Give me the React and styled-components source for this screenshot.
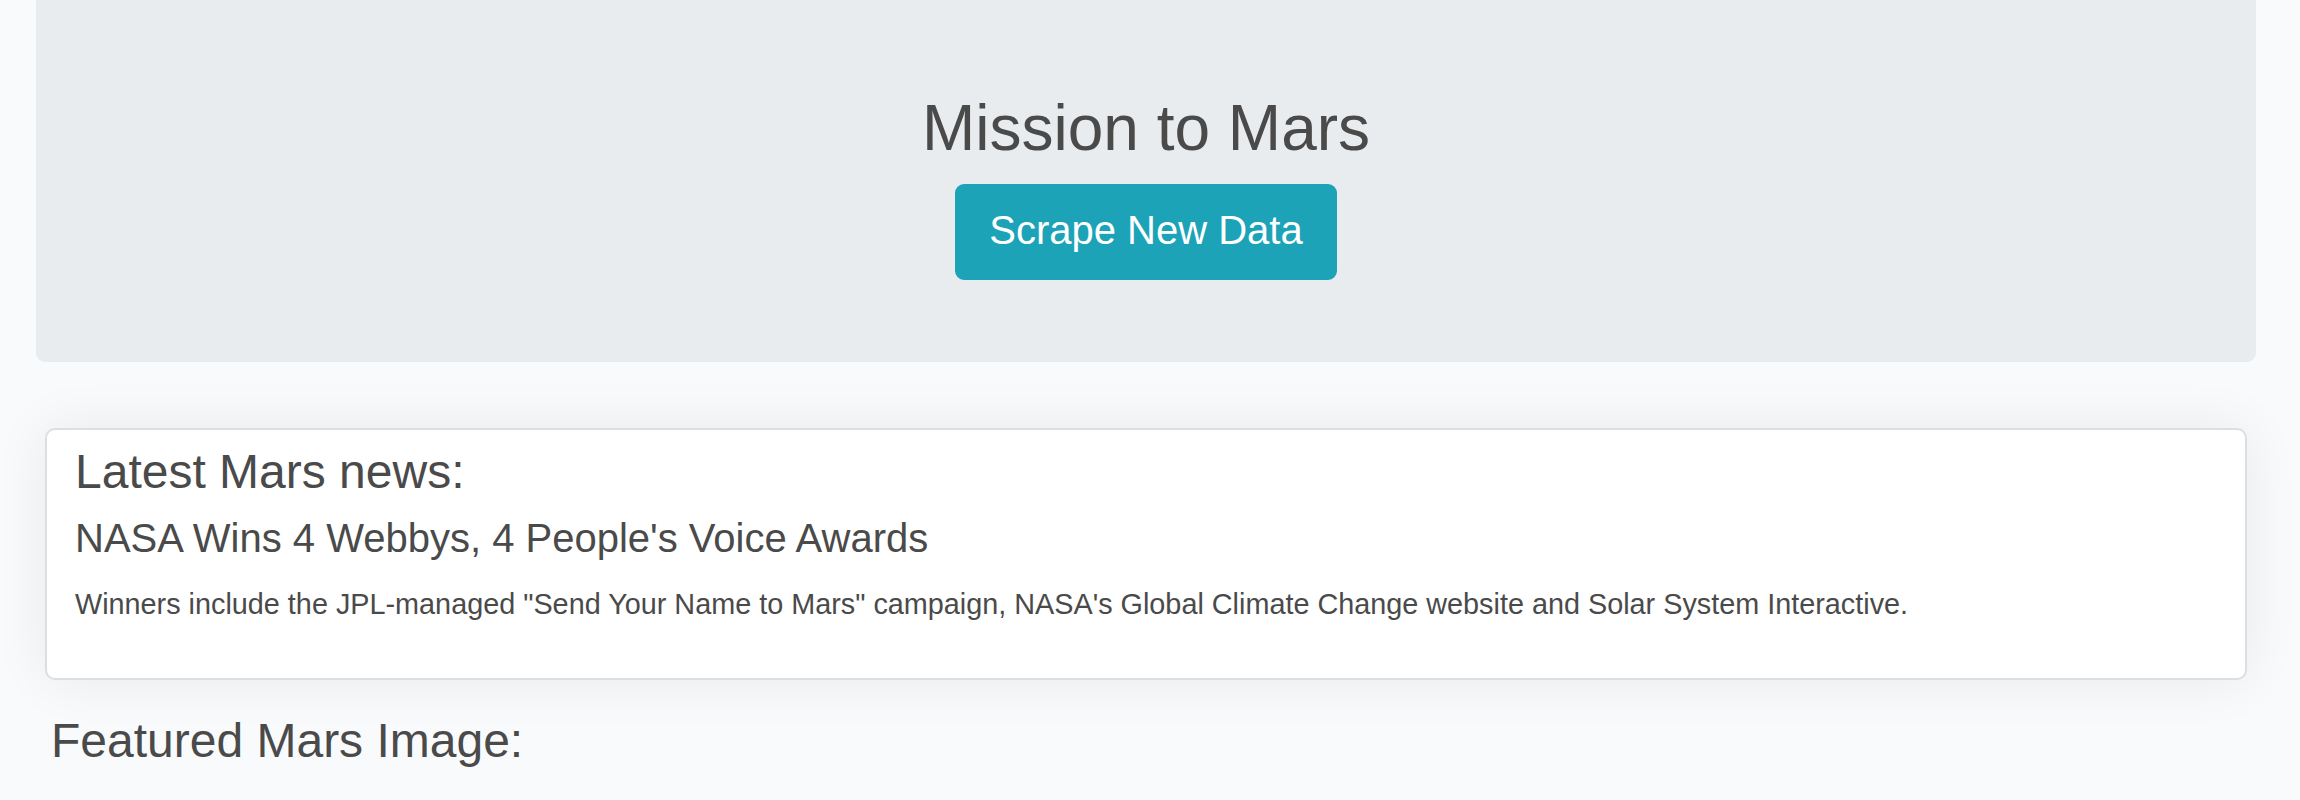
import React from 'react';
import styled, { createGlobalStyle } from 'styled-components';

const GlobalStyle = createGlobalStyle`
  html, body {
    margin: 0;
    padding: 0;
    background-color: #f9fafc;
  }

  body {
    font-family: 'Liberation Sans', Arial, Helvetica, sans-serif;
    color: #4a4a4a;
  }
`;

const Page = styled.div`
  display: flex;
  flex-direction: column;
  padding: 0 44px 0 36px;
  min-height: 800px;
  box-sizing: border-box;
`;

const Jumbotron = styled.header`
  display: flex;
  flex-direction: column;
  align-items: center;
  padding: 90px 0 82px;
  background-color: #e9ecef;
  border-radius: 0 0 9px 9px;

  h1 {
    margin: 0;
    font-size: 64px;
    font-weight: normal;
    line-height: 1.2;
  }
`;

const Button = styled.button`
  margin-top: 17px;
  padding: 14px 32px 18px;
  font-family: inherit;
  font-size: 40px;
  line-height: 60px;
  color: #fff;
  background-color: #1ca3b8;
  border: 2px solid #1ca3b8;
  border-radius: 9px;
  cursor: pointer;
`;

const Section = styled.section`
  display: flex;
  flex-direction: column;
  padding: ${p => p.$pad};
`;

const Card = styled.article`
  padding: 13px 28px 51px;
  background-color: #fff;
  border: 2px solid #dedede;
  border-radius: 10px;
  box-shadow: 0 0 55px rgba(0, 0, 0, 0.07);

  h2 {
    margin: 0;
    font-size: 48px;
    font-weight: normal;
    line-height: 1.2;
  }

  h3 {
    margin: 14px 0 0;
    font-size: 40px;
    font-weight: normal;
    line-height: 1.2;
  }

  p {
    margin: 21px 0 0;
    font-size: 28.8px;
    line-height: 1.5;
  }
`;

const Heading = styled.h2`
  margin: 0;
  font-size: 48px;
  font-weight: normal;
  line-height: 1.2;
`;

export default function App() {
  return (
    <>
      <GlobalStyle />
      <Page>
        <Jumbotron>
          <h1>Mission to Mars</h1>
          <Button type="button">Scrape New Data</Button>
        </Jumbotron>

        <Section $pad="66px 9px 0 9px">
          <Card>
            <h2>Latest Mars news:</h2>
            <h3>NASA Wins 4 Webbys, 4 People's Voice Awards</h3>
            <p>
              Winners include the JPL-managed "Send Your Name to Mars" campaign, NASA's Global
              Climate Change website and Solar System Interactive.
            </p>
          </Card>
        </Section>

        <Section $pad="32px 0 0 15px">
          <Heading>Featured Mars Image:</Heading>
        </Section>
      </Page>
    </>
  );
}
